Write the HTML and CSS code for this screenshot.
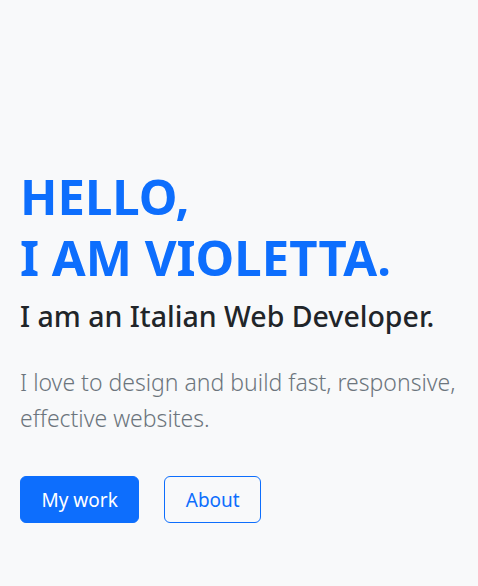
FILE: index.html
```html
<!DOCTYPE html>
<html lang="en">
<head>
<meta charset="utf-8">
<title>Violetta</title>
<link rel="stylesheet" href="styles.css">
</head>
<body>
<main class="hero">
  <h1 class="title">HELLO,<br>I AM VIOLETTA.</h1>
  <h2 class="subtitle">I am an Italian Web Developer.</h2>
  <p class="lead">I love to design and build fast, responsive, effective websites.</p>
  <div class="actions">
    <a class="btn btn-primary" href="#work">My work</a>
    <a class="btn btn-outline" href="#about">About</a>
  </div>
</main>
</body>
</html>
```
FILE: styles.css
```css
html, body {
  margin: 0;
  padding: 0;
  background: #f8f9fa;
  height: 100%;
}
body {
  font-family: "Noto Sans", "Open Sans", sans-serif;
  color: #212529;
}
.hero {
  padding: 166px 20px 0 20px;
}
.title {
  margin: 0;
  font-size: 49px;
  line-height: 61px;
  font-weight: 700;
  color: #0d6efd;
}
.subtitle {
  margin: 8px 0 0 0;
  font-size: 28.5px;
  line-height: 40px;
  font-weight: 500;
  color: #212529;
}
.lead {
  margin: 28px 0 0 0;
  font-size: 23px;
  line-height: 36px;
  font-weight: 300;
  color: #6c757d;
}
.actions {
  display: flex;
  gap: 25px;
  margin-top: 40px;
}
.btn {
  display: inline-block;
  font-size: 19px;
  line-height: 29px;
  padding: 9px 20.5px 7px;
  border: 1px solid #0d6efd;
  border-radius: 6px;
  text-decoration: none;
}
.btn-primary {
  background: #0d6efd;
  color: #fff;
}
.btn-outline {
  background: transparent;
  color: #0d6efd;
}
```
